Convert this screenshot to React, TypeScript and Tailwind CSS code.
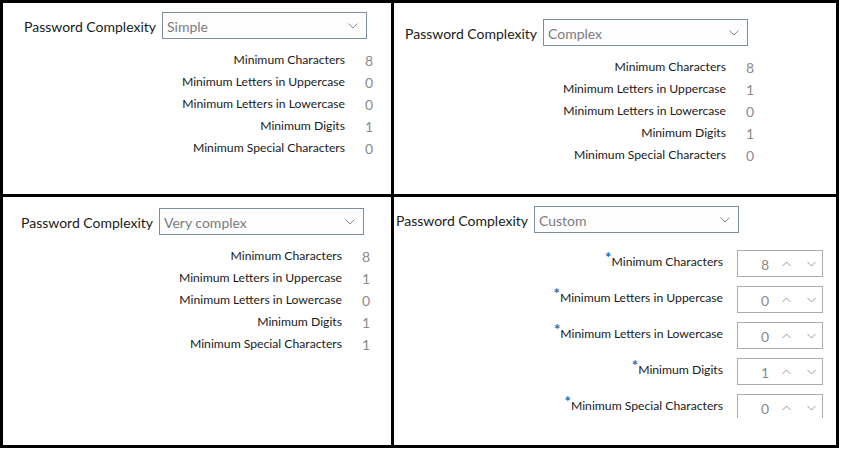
import React from "react";

type Row = { label: string; value: string };

const Chevron = () => (
  <svg width="10" height="6" viewBox="0 0 10 6" className="block">
    <polyline points="0.5,0.5 5,5 9.5,0.5" fill="none" stroke="#8c8c8c" strokeWidth="1" />
  </svg>
);

const Up = () => (
  <svg width="9" height="6" viewBox="0 0 9 6" className="block">
    <polyline points="0.5,5 4.5,1 8.5,5" fill="none" stroke="#9a9a9a" strokeWidth="1" />
  </svg>
);

const Down = () => (
  <svg width="9" height="6" viewBox="0 0 9 6" className="block">
    <polyline points="0.5,1 4.5,5 8.5,1" fill="none" stroke="#9a9a9a" strokeWidth="1" />
  </svg>
);

function Header({ value }: { value: string }) {
  return (
    <div className="flex items-center text-[14px]">
      <div className="w-[138px] shrink-0 text-[#1a1a1a] pt-[2px] whitespace-nowrap">Password Complexity</div>
      <div className="w-[205px] h-[27px] border border-[#7d8e9e] bg-[#fdfdfe] flex items-center justify-between pl-[4px] pr-[8px]">
        <span className="text-[#7c7c7c] pt-[2px]">{value}</span>
        <Chevron />
      </div>
    </div>
  );
}

function StaticRows({ rows }: { rows: Row[] }) {
  return (
    <div className="mt-[10px] flex flex-col">
      {rows.map((r) => (
        <div key={r.label} className="h-[22px] flex items-center">
          <div className="w-[321px] text-right text-[#1a1a1a] whitespace-nowrap">{r.label}</div>
          <div className="pl-[20px] text-[#8a8a8a] text-[14px]">{r.value}</div>
        </div>
      ))}
    </div>
  );
}

function SpinRows({ rows }: { rows: Row[] }) {
  return (
    <div className="mt-[12px] pt-[5px] h-[173px] overflow-hidden flex flex-col gap-[9px]">
      {rows.map((r) => (
        <div key={r.label} className="h-[27px] shrink-0 flex items-center">
          <div className="w-[327px] text-right text-[#1a1a1a] mb-[5px] leading-[18px] whitespace-nowrap">
            <span className="relative -top-[3px] text-[#1d6fb3] text-[15px] font-bold">*</span>
            {r.label}
          </div>
          <div className="ml-[14px] w-[86px] h-[27px] border border-[#acacac] flex items-center">
            <div className="w-[31px] text-right text-[#8a8a8a] text-[14px] pt-[1px]">{r.value}</div>
            <div className="ml-[13px]"><Up /></div>
            <div className="ml-[16px]"><Down /></div>
          </div>
        </div>
      ))}
    </div>
  );
}

const labels = [
  "Minimum Characters",
  "Minimum Letters in Uppercase",
  "Minimum Letters in Lowercase",
  "Minimum Digits",
  "Minimum Special Characters",
];

const mk = (vals: string[]): Row[] => labels.map((l, i) => ({ label: l, value: vals[i] }));

export default function App() {
  return (
    <div className="w-[841px] h-[451px] bg-white font-['Lato',sans-serif] text-[12.2px]">
      <div className="w-[839px] h-[448px] bg-black p-[3px] grid grid-cols-[388px_442px] grid-rows-[191px_248px] gap-[3px]">
        <div className="bg-white pt-[9px] pl-[21px]">
          <Header value="Simple" />
          <StaticRows rows={mk(["8", "0", "0", "1", "0"])} />
        </div>
        <div className="bg-white pt-[16px] pl-[11px]">
          <Header value="Complex" />
          <StaticRows rows={mk(["8", "1", "0", "1", "0"])} />
        </div>
        <div className="bg-white pt-[11px] pl-[18px]">
          <Header value="Very complex" />
          <StaticRows rows={mk(["8", "1", "0", "1", "1"])} />
        </div>
        <div className="bg-white pt-[9px] pl-[2px]">
          <Header value="Custom" />
          <SpinRows rows={mk(["8", "0", "0", "1", "0"])} />
        </div>
      </div>
    </div>
  );
}
